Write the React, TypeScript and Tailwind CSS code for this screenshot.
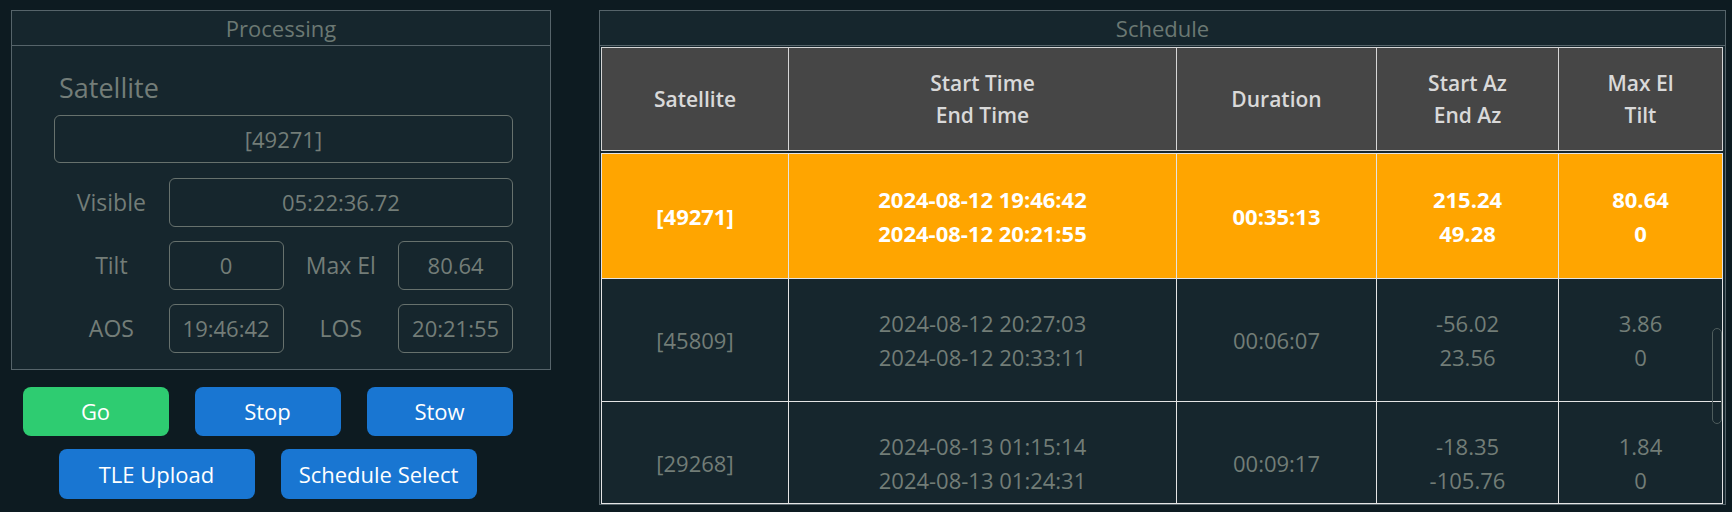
type Pass = {
  sat: string;
  start: string;
  end: string;
  duration: string;
  startAz: string;
  endAz: string;
  maxEl: string;
  tilt: string;
  active?: boolean;
};

const PASSES: Array<Pass> = [
  { sat: "[49271]", start: "2024-08-12 19:46:42", end: "2024-08-12 20:21:55", duration: "00:35:13", startAz: "215.24", endAz: "49.28", maxEl: "80.64", tilt: "0", active: true },
  { sat: "[45809]", start: "2024-08-12 20:27:03", end: "2024-08-12 20:33:11", duration: "00:06:07", startAz: "-56.02", endAz: "23.56", maxEl: "3.86", tilt: "0" },
  { sat: "[29268]", start: "2024-08-13 01:15:14", end: "2024-08-13 01:24:31", duration: "00:09:17", startAz: "-18.35", endAz: "-105.76", maxEl: "1.84", tilt: "0" },
];

const Field = ({ value }: { value: string }) => (
  <div className="flex h-full items-center justify-center rounded-[6px] border border-[#67716d] text-[22px] text-[#737d78]">
    {value}
  </div>
);

const Label = ({ text }: { text: string }) => (
  <div className="flex h-full items-center justify-center text-[23px] text-[#737d78]">{text}</div>
);

const Processing = () => {
  return (
    <div className="flex h-[360px] w-[540px] flex-col border border-[#56646a] bg-[#16262d]">
      <div className="flex h-[35px] shrink-0 items-center justify-center border-b border-[#56646a] text-[22px] text-[#6b7873]">
        Processing
      </div>
      <div className="flex flex-col pl-[42px] pr-[37px]">
        <div className="mt-[25px] h-[34px] pl-[5px] text-[27px] leading-[34px] text-[#737d78]">Satellite</div>
        <div className="mt-[10px] h-[48px]">
          <Field value="[49271]" />
        </div>
        <div className="mt-[15px] grid grid-cols-4 grid-rows-[49px_49px_49px] gap-y-[14px]">
          <Label text="Visible" />
          <div className="col-span-3">
            <Field value="05:22:36.72" />
          </div>
          <Label text="Tilt" />
          <Field value="0" />
          <Label text="Max El" />
          <Field value="80.64" />
          <Label text="AOS" />
          <Field value="19:46:42" />
          <Label text="LOS" />
          <Field value="20:21:55" />
        </div>
      </div>
    </div>
  );
};

const Controls = () => {
  const btn = "flex h-[49px] items-center justify-center rounded-[8px] text-[22px] font-medium text-white";
  return (
    <div className="ml-[11px] mt-[17px] flex w-[491px] flex-col items-center gap-[13px]">
      <div className="flex gap-[26px]">
        <button className={`${btn} w-[146px] bg-[#2ecc71]`}>Go</button>
        <button className={`${btn} w-[146px] bg-[#1976d2]`}>Stop</button>
        <button className={`${btn} w-[146px] bg-[#1976d2]`}>Stow</button>
      </div>
      <div className="flex gap-[26px]">
        <button className={`${btn} h-[50px] w-[196px] bg-[#1976d2]`}>TLE Upload</button>
        <button className={`${btn} h-[50px] w-[196px] bg-[#1976d2]`}>Schedule Select</button>
      </div>
    </div>
  );
};

const Schedule = () => {
  const cols = "grid grid-cols-[187px_388px_200px_182px_1fr]";
  return (
    <div className="flex h-[495px] w-[1127px] flex-col border border-[#56646a] bg-[#16262d]">
      <div className="flex h-[35px] shrink-0 items-center justify-center border-b border-[#56646a] text-[22px] text-[#6b7873]">
        Schedule
      </div>
      <div className="ml-[1px] mt-[1px] w-[1122px]">
        <div className={`${cols} h-[104px] border border-[#d6d6d6] bg-[#464646] text-[21px] font-semibold leading-[32px] text-[#d9d9d9]`}>
          <div className="flex items-center justify-center border-r border-[#d6d6d6]">Satellite</div>
          <div className="flex flex-col items-center justify-center border-r border-[#d6d6d6]">
            <span>Start Time</span>
            <span>End Time</span>
          </div>
          <div className="flex items-center justify-center border-r border-[#d6d6d6]">Duration</div>
          <div className="flex flex-col items-center justify-center border-r border-[#d6d6d6]">
            <span>Start Az</span>
            <span>End Az</span>
          </div>
          <div className="flex flex-col items-center justify-center">
            <span>Max El</span>
            <span>Tilt</span>
          </div>
        </div>
        <div className="mt-[2px] h-[351px] overflow-hidden border border-[#e4e4e4]">
          {PASSES.map((p, idx) => (
            <div
              key={p.sat}
              className={`${cols} ${idx === 0 ? "h-[125px]" : "h-[123px]"} border-b border-[#e4e4e4] text-[22px] leading-[34px] ${
                p.active ? "bg-[#ffa500] font-bold text-white" : "bg-[#16262d] text-[#727d77]"
              }`}
            >
              <div className="flex items-center justify-center border-r border-[#e4e4e4]">{p.sat}</div>
              <div className="flex flex-col items-center justify-center border-r border-[#e4e4e4]">
                <span>{p.start}</span>
                <span>{p.end}</span>
              </div>
              <div className="flex items-center justify-center border-r border-[#e4e4e4]">{p.duration}</div>
              <div className="flex flex-col items-center justify-center border-r border-[#e4e4e4]">
                <span>{p.startAz}</span>
                <span>{p.endAz}</span>
              </div>
              <div className="flex flex-col items-center justify-center">
                <span>{p.maxEl}</span>
                <span>{p.tilt}</span>
              </div>
            </div>
          ))}
        </div>
      </div>
    </div>
  );
};

export default function App() {
  return (
    <div className="relative h-[512px] w-[1732px] overflow-hidden bg-[#0d1b21] font-['Open_Sans',sans-serif]">
      <div className="flex gap-[48px] pl-[11px] pt-[10px]">
        <div className="flex flex-col">
          <Processing />
          <Controls />
        </div>
        <Schedule />
      </div>
      {/* scrollbar thumb */}
      <div className="absolute left-[1712px] top-[328px] h-[96px] w-[10px] rounded-full border border-[#4f5d5d]" />
    </div>
  );
}
